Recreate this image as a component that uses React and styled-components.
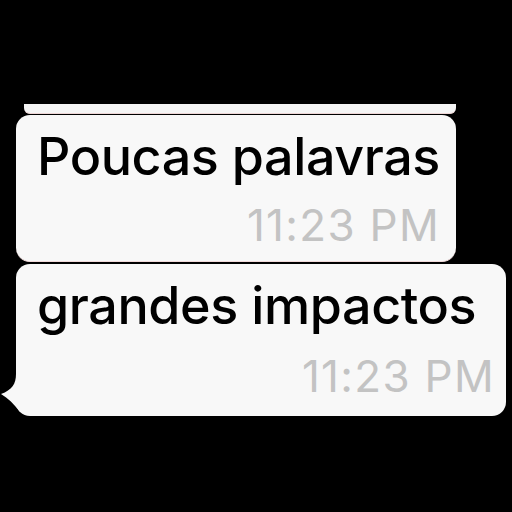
import styled, { createGlobalStyle } from "styled-components";

const GlobalStyle = createGlobalStyle`
  html, body {
    margin: 0;
    padding: 0;
    background: #000;
  }
  body {
    font-family: Inter, "Liberation Sans", Arial, sans-serif;
  }
`;

const Page = styled.div`
  width: 512px;
  height: 512px;
  padding: 104px 0 0 16px;
  box-sizing: border-box;
  display: flex;
  flex-direction: column;
  align-items: flex-start;
  overflow: hidden;
`;

// bottom of the message above, cut off by the crop
const PrevEdge = styled.div`
  margin-left: 8px;
  width: 432px;
  height: 9px;
  background: #f5f5f5;
  border-bottom: 1px solid #eed6d6;
  border-radius: 0 0 6px 6px;
`;

const Bubble = styled.div`
  position: relative;
  width: ${(p) => p.$width}px;
  height: ${(p) => p.$height}px;
  margin-top: ${(p) => p.$top}px;
  box-sizing: border-box;
  padding: 12px ${(p) => p.$right}px 0 21px;
  background: #f8f8f8;
  border-radius: 14px;
  border-bottom: ${(p) => (p.$edge ? "1px solid #f0d9d9" : "none")};
  display: flex;
  flex-direction: column;
`;

const Text = styled.div`
  font-size: 52px;
  font-weight: 500;
  line-height: 60px;
  letter-spacing: -0.4px;
  color: #000;
  white-space: nowrap;
`;

const Time = styled.div`
  align-self: flex-end;
  margin-top: ${(p) => p.$gap}px;
  font-size: 44px;
  line-height: 44px;
  letter-spacing: 1.3px;
  color: #c3c3c3;
  white-space: nowrap;
`;

const Tail = styled.svg`
  position: absolute;
  left: -16px;
  bottom: 2px;
`;

function Message({ text, width, height, top, right, gap, edge, tail }) {
  return (
    <Bubble $width={width} $height={height} $top={top} $right={right} $edge={edge}>
      <Text>{text}</Text>
      <Time $gap={gap}>11:23 PM</Time>
      {tail && (
        <Tail width="30" height="40" viewBox="0 0 30 40">
          <path d="M16 0 C16 10 12 16 1 20 C8 24 14 30 20 38 L30 40 L30 0 Z" fill="#f8f8f8" />
        </Tail>
      )}
    </Bubble>
  );
}

export default function App() {
  return (
    <>
      <GlobalStyle />
      <Page>
        <PrevEdge />
        <Message text="Poucas palavras" width={440} height={147} top={1} right={16} gap={16} edge />
        <Message text="grandes impactos" width={490} height={152} top={2} right={11} gap={18} tail />
      </Page>
    </>
  );
}
